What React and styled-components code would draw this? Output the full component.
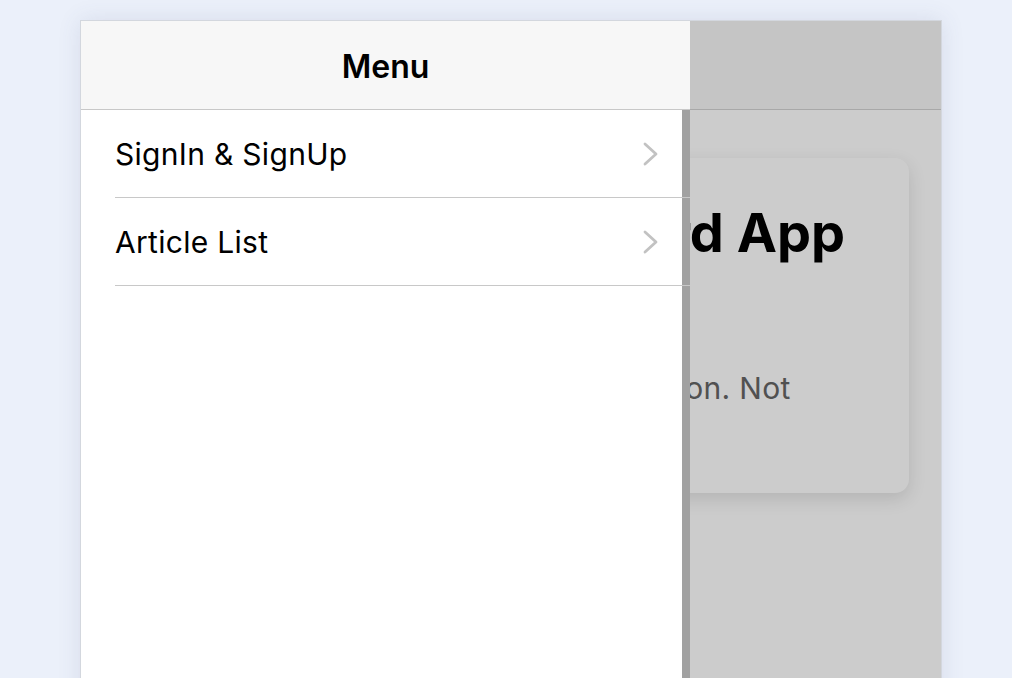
import React from "react";
import styled, { createGlobalStyle } from "styled-components";

const Global = createGlobalStyle`
  html, body { margin: 0; padding: 0; overflow: hidden; }
  body {
    background: #ebf0fa;
    font-family: Inter, "Noto Sans", Roboto, sans-serif;
    -webkit-font-smoothing: antialiased;
  }
`;

const Page = styled.div`
  padding: 20px 0 0 80px;
  height: 678px;
  box-sizing: border-box;
`;

const Frame = styled.div`
  position: relative;
  width: 862px;
  height: 720px;
  box-sizing: border-box;
  border: 1px solid #d3d7de;
  background: #fff;
  box-shadow: 0 0 22px rgba(70, 85, 120, 0.12);
  overflow: hidden;
  display: flex;
  flex-direction: column;
`;

const AppHeader = styled.header`
  height: 88px;
  flex: none;
  background: #f7f7f7;
  border-bottom: 1px solid #d2d2d2;
`;

const Content = styled.main`
  flex: 1;
  padding: 48px 32px;
  background: #fff;
`;

const Card = styled.section`
  height: 335px;
  box-sizing: border-box;
  background: #fff;
  border-radius: 14px;
  box-shadow: 0 6px 18px rgba(0, 0, 0, 0.12);
  padding: 42px 58px 44px 40px;
  text-align: center;
`;

const Title = styled.h1`
  margin: 0;
  font-size: 54px;
  line-height: 66px;
  font-weight: 700;
  color: #000;
`;

const Paragraph = styled.p`
  margin: 102px 0 0;
  padding-left: 8px;
  font-size: 30px;
  letter-spacing: 0.3px;
  line-height: 40px;
  color: #666;
`;

const Overlay = styled.div`
  position: absolute;
  inset: 0;
  background: rgba(0, 0, 0, 0.2);
`;

const Drawer = styled.nav`
  position: absolute;
  left: 0;
  top: 0;
  bottom: 0;
  width: 609px;
  display: flex;
  flex-direction: column;
`;

const DrawerHeader = styled.div`
  height: 89px;
  box-sizing: border-box;
  padding-top: 3px;
  flex: none;
  background: #f7f7f7;
  border-bottom: 1px solid #c8c8c8;
  display: flex;
  align-items: center;
  justify-content: center;
  font-size: 32px;
  font-weight: 600;
  color: #000;
`;

const List = styled.ul`
  flex: 1;
  margin: 0;
  padding: 0;
  list-style: none;
  background: #fff;
  box-shadow: inset -8px 0 0 #a1a1a1;
`;

const Row = styled.li`
  height: 88px;
  box-sizing: border-box;
  margin-left: 34px;
  padding-right: 32px;
  border-bottom: 1px solid #c8c8c8;
  display: flex;
  align-items: center;
  justify-content: space-between;
  font-size: 30px;
  letter-spacing: 0.3px;
  color: #000;
`;

const Chevron = () => (
  <svg width="15" height="24" viewBox="0 0 15 24" fill="none">
    <path d="M2 2 L13 12 L2 22" stroke="#c2c2c2" strokeWidth="2.8" strokeLinecap="round" strokeLinejoin="round" />
  </svg>
);

const items = ["SignIn & SignUp", "Article List"];

export default function App() {
  return (
    <>
      <Global />
      <Page>
        <Frame>
          <AppHeader />
          <Content>
            <Card>
              <Title>Welcome to Standard App</Title>
              <Paragraph>
                This is a sample drawer navigation. Not
                <br />
                for production use.
              </Paragraph>
            </Card>
          </Content>
          <Overlay />
          <Drawer>
            <DrawerHeader>Menu</DrawerHeader>
            <List>
              {items.map((t) => (
                <Row key={t}>
                  <span>{t}</span>
                  <Chevron />
                </Row>
              ))}
            </List>
          </Drawer>
        </Frame>
      </Page>
    </>
  );
}
